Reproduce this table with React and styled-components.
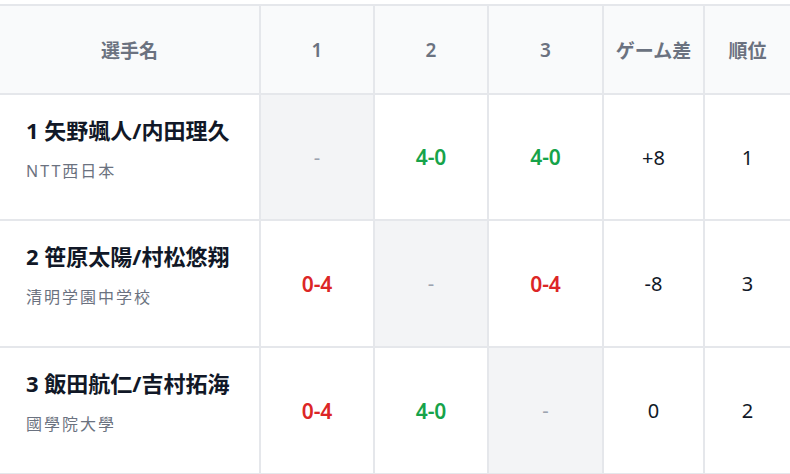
import React from 'react';
import styled, { createGlobalStyle } from 'styled-components';

const GlobalStyle = createGlobalStyle`
  body {
    margin: 0;
    overflow: hidden;
    background: #ffffff;
    font-family: "Noto Sans", "Noto Sans CJK JP", sans-serif;
  }
`;

const Board = styled.div`
  display: grid;
  grid-template-columns: 259px 112px 112px 113px 99px 85px;
  grid-template-rows: 87px 124px 125px 125px;
  gap: 2px;
  padding: 2px;
  width: max-content;
  margin: 4px 0 0 -2px;
  background: #e5e7eb;
`;

const HeadCell = styled.div`
  display: flex;
  align-items: center;
  justify-content: center;
  background: #f9fafb;
  color: #6b7280;
  font-size: 19px;
  font-weight: 600;
`;

const NameCell = styled.div`
  background: #ffffff;
  padding: 19px 0 0 26px;
`;

const PlayerName = styled.div`
  font-size: 22px;
  font-weight: 700;
  line-height: 32px;
  color: #111827;
`;

const Team = styled.div`
  margin-top: 13px;
  font-size: 16px;
  line-height: 24px;
  color: #6b7280;
  letter-spacing: 2px;
`;

const Cell = styled.div`
  display: flex;
  align-items: center;
  justify-content: center;
  background: ${({ $self }) => ($self ? '#f3f4f6' : '#ffffff')};
  color: ${({ $tone }) =>
    $tone === 'win' ? '#16a34a' : $tone === 'lose' ? '#dc2626' : $tone === 'muted' ? '#9ca3af' : '#111827'};
  font-size: ${({ $tone }) => ($tone === 'win' || $tone === 'lose' ? '21px' : '20px')};
  font-weight: ${({ $tone }) => ($tone === 'win' || $tone === 'lose' ? 600 : 400)};
`;

const players = [
  {
    name: '1 矢野颯人/内田理久',
    team: 'NTT西日本',
    results: [null, '4-0', '4-0'],
    diff: '+8',
    rank: '1',
  },
  {
    name: '2 笹原太陽/村松悠翔',
    team: '清明学園中学校',
    results: ['0-4', null, '0-4'],
    diff: '-8',
    rank: '3',
  },
  {
    name: '3 飯田航仁/吉村拓海',
    team: '國學院大學',
    results: ['0-4', '4-0', null],
    diff: '0',
    rank: '2',
  },
];

const toneOf = (score) => {
  const [a, b] = score.split('-').map(Number);
  return a > b ? 'win' : 'lose';
};

const App = () => (
  <>
    <GlobalStyle />
    <Board>
      <HeadCell>選手名</HeadCell>
      <HeadCell>1</HeadCell>
      <HeadCell>2</HeadCell>
      <HeadCell>3</HeadCell>
      <HeadCell>ゲーム差</HeadCell>
      <HeadCell>順位</HeadCell>
      {players.map((p) => (
        <React.Fragment key={p.name}>
          <NameCell>
            <PlayerName>{p.name}</PlayerName>
            <Team>{p.team}</Team>
          </NameCell>
          {p.results.map((r, i) =>
            r ? (
              <Cell key={i} $tone={toneOf(r)}>{r}</Cell>
            ) : (
              <Cell key={i} $self $tone="muted">-</Cell>
            )
          )}
          <Cell>{p.diff}</Cell>
          <Cell>{p.rank}</Cell>
        </React.Fragment>
      ))}
    </Board>
  </>
);

export default App;
